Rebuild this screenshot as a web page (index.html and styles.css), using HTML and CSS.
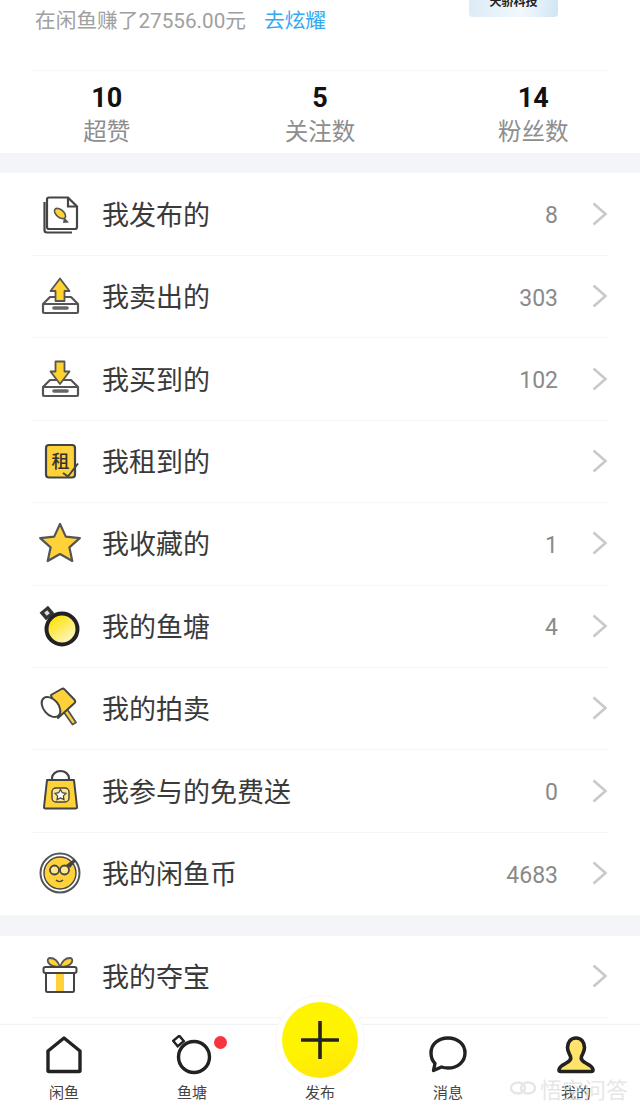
FILE: index.html
```html
<!DOCTYPE html>
<html lang="zh-CN">
<head>
  <meta charset="utf-8">
  <title>我的</title>
  <link rel="stylesheet" href="styles.css">
</head>
<body>
  <svg class="defs" width="0" height="0" aria-hidden="true">
    <defs>
      <linearGradient id="pondFill" x1="0.2" y1="0.1" x2="0.8" y2="0.9">
        <stop offset="0" stop-color="#ffe100"/>
        <stop offset="1" stop-color="#fdf6c8"/>
      </linearGradient>
      <symbol id="chevron" viewBox="0 0 16 24">
        <path d="M1.500 1.500l12 10.500-12 10.500" fill="none" stroke="#c9c9c9" stroke-width="2.600"/>
      </symbol>
    </defs>
  </svg>

  <div class="page">
    <main class="scroll">
      <!-- 顶部收入 -->
      <div class="earn">
        <p class="earn-text">在闲鱼赚了27556.00元<a class="earn-link" href="#">去炫耀</a></p>
        <div class="badge"><span>天骄科技</span></div>
      </div>

      <div class="stats">
        <div class="stat"><b>10</b><span>超赞</span></div>
        <div class="stat"><b>5</b><span>关注数</span></div>
        <div class="stat"><b>14</b><span>粉丝数</span></div>
      </div>

      <ul class="menu">
        <li class="row">
          <svg class="row-icon" viewBox="0 0 56 56">
            <path d="M12.500 16v28a2.500 2.500 0 0 0 2.500 2.500h25" fill="none" stroke="#444" stroke-width="2.200"/>
            <path d="M17 11.500h19l9 9V41a2 2 0 0 1-2 2H17a2 2 0 0 1-2-2V13.500a2 2 0 0 1 2-2z" fill="#fff" stroke="#444" stroke-width="2.200"/>
            <path d="M36 11.500v9h9" fill="none" stroke="#444" stroke-width="2.200"/>
            <path d="M32 31l5 5.500-6 .5z" fill="#555"/>
            <ellipse cx="28" cy="27.500" rx="6.500" ry="3.800" transform="rotate(40 28 27.500)" fill="#ffd43a" stroke="#555" stroke-width="1.600"/>
          </svg>
          <span class="row-title">我发布的</span><span class="row-num">8</span>
          <svg class="chevron"><use href="#chevron"/></svg>
        </li>
        <li class="row">
          <svg class="row-icon" viewBox="0 0 56 56">
            <path d="M18 29L11 36v8a1 1 0 0 0 1 1h33a1 1 0 0 0 1-1v-8l-7-7z" fill="#fff" stroke="#555" stroke-width="2.200" stroke-linejoin="round"/>
            <path d="M11 36h35" stroke="#555" stroke-width="2.200"/>
            <path d="M28 10.500l9.500 12.500H32.500v10h-9V23h-5z" fill="#ffd22e" stroke="#555" stroke-width="1.800" stroke-linejoin="round"/>
            <path d="M22 40h13" stroke="#666" stroke-width="3.600" stroke-linecap="round"/>
          </svg>
          <span class="row-title">我卖出的</span><span class="row-num">303</span>
          <svg class="chevron"><use href="#chevron"/></svg>
        </li>
        <li class="row">
          <svg class="row-icon" viewBox="0 0 56 56">
            <path d="M18 29L11 36v8a1 1 0 0 0 1 1h33a1 1 0 0 0 1-1v-8l-7-7z" fill="#fff" stroke="#555" stroke-width="2.200" stroke-linejoin="round"/>
            <path d="M11 36h35" stroke="#555" stroke-width="2.200"/>
            <path d="M23.500 10.500h9v10h5L28 33l-9.500-12.500h5z" fill="#ffd22e" stroke="#555" stroke-width="1.800" stroke-linejoin="round"/>
            <path d="M22 40h13" stroke="#666" stroke-width="3.600" stroke-linecap="round"/>
          </svg>
          <span class="row-title">我买到的</span><span class="row-num">102</span>
          <svg class="chevron"><use href="#chevron"/></svg>
        </li>
        <li class="row">
          <svg class="row-icon" viewBox="0 0 56 56">
            <rect x="14" y="12" width="29" height="32.500" rx="3" fill="#ffd23a" stroke="#444" stroke-width="2.200"/>
            <text class="rent-char" x="28.500" y="34.500" text-anchor="middle">租</text>
            <path d="M31 40l5 3.500L46 30.500" fill="none" stroke="#444" stroke-width="2"/>
          </svg>
          <span class="row-title">我租到的</span>
          <svg class="chevron"><use href="#chevron"/></svg>
        </li>
        <li class="row">
          <svg class="row-icon" viewBox="0 0 56 56">
            <path d="M28 9l5.800 12.600 14 1.500-10.400 9.300 2.900 13.600L28 39l-12.300 7 2.900-13.600L8.200 23.100l14-1.500z" fill="#ffd23a" stroke="#555" stroke-width="2.200" stroke-linejoin="round"/>
          </svg>
          <span class="row-title">我收藏的</span><span class="row-num">1</span>
          <svg class="chevron"><use href="#chevron"/></svg>
        </li>
        <li class="row">
          <svg class="row-icon" viewBox="0 0 56 56">
            <rect x="9.500" y="10" width="11" height="10" transform="rotate(-40 15 15)" fill="#333"/>
            <rect x="13" y="13" width="4" height="4" transform="rotate(-40 15 15)" fill="#ddd"/>
            <circle cx="30" cy="31" r="15.500" fill="url(#pondFill)" stroke="#222" stroke-width="4"/>
          </svg>
          <span class="row-title">我的鱼塘</span><span class="row-num">4</span>
          <svg class="chevron"><use href="#chevron"/></svg>
        </li>
        <li class="row">
          <svg class="row-icon" viewBox="0 0 56 56">
            <path d="M31 31l9.500 13.500 3.500-2L35 29z" fill="#ffd23a" stroke="#555" stroke-width="1.800" stroke-linejoin="round"/>
            <path d="M19 15L29.500 9a2.500 2.500 0 0 1 3 .4l10 10.400a2.500 2.500 0 0 1 .1 3.200L26 38z" fill="#ffd23a" stroke="#444" stroke-width="2" stroke-linejoin="round"/>
            <ellipse cx="19" cy="27" rx="7.500" ry="11.500" transform="rotate(-40 19 27)" fill="#fff" stroke="#444" stroke-width="2"/>
          </svg>
          <span class="row-title">我的拍卖</span>
          <svg class="chevron"><use href="#chevron"/></svg>
        </li>
        <li class="row">
          <svg class="row-icon" viewBox="0 0 56 56">
            <path d="M20 17v-2a8.500 7 0 0 1 17 0v2" fill="none" stroke="#444" stroke-width="2.200"/>
            <path d="M15 17h27l3 27a1.500 1.500 0 0 1-1.500 1.500h-30A1.500 1.500 0 0 1 12 44z" fill="#ffd23a" stroke="#444" stroke-width="2" stroke-linejoin="round"/>
            <rect x="20" y="25" width="17" height="14" rx="4" fill="#ffe88a" stroke="#444" stroke-width="1.400"/>
            <path d="M28.500 26.500l1.800 3.200 3.700.6-2.600 2.600.6 3.700-3.500-1.700-3.500 1.700.6-3.700-2.600-2.600 3.700-.6z" fill="#fff" stroke="#444" stroke-width="1.200"/>
          </svg>
          <span class="row-title">我参与的免费送</span><span class="row-num">0</span>
          <svg class="chevron"><use href="#chevron"/></svg>
        </li>
        <li class="row">
          <svg class="row-icon" viewBox="0 0 56 56">
            <circle cx="28" cy="28" r="19.500" fill="#fff" stroke="#555" stroke-width="2"/>
            <circle cx="28" cy="28" r="16" fill="#ffd23a" stroke="#444" stroke-width="1.400"/>
            <circle cx="22.500" cy="25" r="4.500" fill="#ffe88a" stroke="#444" stroke-width="1.800"/>
            <circle cx="32.500" cy="25" r="4.500" fill="#ffe88a" stroke="#444" stroke-width="1.800"/>
            <path d="M24 35c2 2 5 2 7 0" fill="none" stroke="#444" stroke-width="1.500"/>
            <path d="M34 20l8-6 2 2-6 7z" fill="#444"/>
          </svg>
          <span class="row-title">我的闲鱼币</span><span class="row-num">4683</span>
          <svg class="chevron"><use href="#chevron"/></svg>
        </li>
      </ul>

      <ul class="menu menu-second">
        <li class="row">
          <svg class="row-icon" viewBox="0 0 56 56">
            <path d="M28 19c-2-6-6-9-10-9s-4 9 10 9zm0 0c2-6 6-9 10-9s4 9-10 9z" fill="#ffd23a" stroke="#555" stroke-width="1.800"/>
            <rect x="14" y="24" width="28" height="20" fill="#fff"/>
            <rect x="24" y="24" width="8" height="20" fill="#ffd23a"/>
            <rect x="14" y="24" width="28" height="20" rx="1.500" fill="none" stroke="#444" stroke-width="2"/>
            <rect x="11.500" y="19" width="33" height="6" rx="2" fill="#fff" stroke="#444" stroke-width="2"/>
          </svg>
          <span class="row-title">我的夺宝</span>
          <svg class="chevron"><use href="#chevron"/></svg>
        </li>
      </ul>
    </main>

    <!-- 底部导航 -->
    <nav class="tabbar">
      <a class="tab" href="#">
        <svg class="tab-icon" viewBox="0 0 40 40">
          <path d="M20 3L36 16v19.500a1 1 0 0 1-1 1H5a1 1 0 0 1-1-1V16z" fill="none" stroke="#222" stroke-width="3.400" stroke-linejoin="round"/>
        </svg>
        <span>闲鱼</span>
      </a>
      <a class="tab tab-dot" href="#">
        <svg class="tab-icon" viewBox="0 0 40 40">
          <rect x="2.500" y="2.500" width="8" height="7" transform="rotate(-40 6.500 6)" fill="none" stroke="#222" stroke-width="2.400"/>
          <circle cx="22" cy="22" r="15.500" fill="#fff" stroke="#222" stroke-width="3.400"/>
        </svg>
        <span>鱼塘</span>
      </a>
      <a class="tab tab-publish" href="#">
        <span class="publish-btn">
          <svg width="38" height="38" viewBox="0 0 38 38">
            <path d="M1 19h36M19 1v36" stroke="#222" stroke-width="3.600" stroke-linecap="round"/>
          </svg>
        </span>
        <span>发布</span>
      </a>
      <a class="tab" href="#">
        <svg class="tab-icon" viewBox="0 0 40 40">
          <path d="M20 3c10 0 17 6.500 17 15S30 33 20 33c-3 0-5-.5-6.500-1l-8 3.500 1.500-7C4 25.500 3 22 3 18 3 9.500 10 3 20 3z" fill="none" stroke="#222" stroke-width="3.400" stroke-linejoin="round"/>
        </svg>
        <span>消息</span>
      </a>
      <a class="tab" href="#">
        <svg class="tab-icon" viewBox="0 0 40 40">
          <path d="M20 3c-5.500 0-8.500 4.500-8.500 9.500 0 4 2 6.500 3 9 1 3-1 5-5 7-3 1.500-6.500 3-6.500 6.500 0 1 1 1.500 2 1.500h30c1 0 2-.5 2-1.500 0-3.500-3.500-5-6.500-6.500-4-2-6-4-5-7 1-2.500 3-5 3-9C28.500 7.500 25.500 3 20 3z" fill="#ffe36a" stroke="#222" stroke-width="3.600" stroke-linejoin="round"/>
        </svg>
        <span>我的</span>
      </a>
    </nav>

    <!-- 水印 -->
    <div class="watermark">
      <svg width="26" height="18" viewBox="0 0 26 18">
        <ellipse cx="8" cy="9" rx="7" ry="5.500" fill="none" stroke="#e6e6e6" stroke-width="2.500"/>
        <ellipse cx="18" cy="9" rx="7" ry="5.500" fill="none" stroke="#e6e6e6" stroke-width="2.500"/>
      </svg>
      <span>悟空问答</span>
    </div>
  </div>
</body>
</html>
```

FILE: styles.css
```css
/* Base */
* {
  box-sizing: border-box;
}

body {
  margin: 0;
  background-color: #fff;
  font-family: "Noto Sans CJK SC", "Noto Sans", sans-serif;
  color: #333;
}

ul {
  list-style: none;
  margin: 0;
  padding: 0;
}

a {
  text-decoration: none;
  color: inherit;
}

.defs {
  position: absolute;
}

.page {
  position: relative;
  display: flex;
  flex-direction: column;
  height: 1111px;
  overflow: hidden;
}

.scroll {
  flex: 1;
  min-height: 0;
  overflow: hidden;
}

/* Earnings line */
.earn {
  display: flex;
  justify-content: space-between;
  align-items: flex-start;
  height: 71px;
  margin: 0 32px;
  padding: 0 50px 0 3px;
  border-bottom: 1px solid #f6f6f6;
}

.earn-text {
  margin: 6px 0 0;
  font-size: 20.7px;
  line-height: 30px;
  color: #a0a0a0;
  font-family: Roboto, "Noto Sans CJK SC", sans-serif;
}

.earn-link {
  margin-left: 18px;
  color: #35a9f0;
}

/* Card scrolled off the top, only its lower edge shows */
.badge {
  display: flex;
  justify-content: center;
  align-items: flex-end;
  width: 89px;
  height: 17px;
  overflow: hidden;
  border-radius: 0 0 4px 4px;
  background: linear-gradient(100deg, #dcebf6, #f2f8fc 60%, #cfe5f5);
}

.badge span {
  flex: none;
  margin-bottom: 10px;
  font-size: 12px;
  line-height: 12px;
  font-weight: 700;
  color: #222;
}

/* Stats */
.stats {
  display: grid;
  grid-template-columns: 1fr 1fr 1fr;
  height: 82px;
  padding: 11px 0 0;
}

.stat {
  display: flex;
  flex-direction: column;
  align-items: center;
}

.stat b {
  font-family: Roboto, sans-serif;
  font-size: 27px;
  line-height: 32px;
  font-weight: 700;
  color: #111;
}

.stat span {
  margin-top: -1px;
  font-size: 23.5px;
  line-height: 34px;
  color: #8e8e8e;
}

/* Menu rows */
.menu {
  padding: 0.6px 32px 0;
  border-top: 20px solid #f4f5f9;
}

.menu-second {
  margin-top: -0.6px;
  padding-top: 0;
  border-top-width: 21px;
}

.row {
  display: flex;
  align-items: center;
  height: 82.4px;
  padding-bottom: 1px;
  border-bottom: 1px solid #f6f6f6;
}

.menu > .row:nth-child(9) {
  border-bottom: 0;
}

.row-icon {
  flex: none;
  width: 56px;
  height: 56px;
  margin-right: 14px;
}

.rent-char {
  font-size: 18px;
  font-weight: 500;
  fill: #333;
}

.row-title {
  flex: 1;
  font-size: 27px;
  line-height: 36px;
  color: #3a3a3a;
}

.row-num {
  margin-top: 4px;
  font-family: Roboto, sans-serif;
  font-size: 23px;
  color: #8a8a8a;
}

.chevron {
  flex: none;
  width: 16px;
  height: 24px;
  margin-left: 34px;
}

/* Tab bar */
.tabbar {
  flex: none;
  display: grid;
  grid-template-columns: repeat(5, 1fr);
  height: 87px;
  background-color: #fff;
  border-top: 1px solid #f2f2f2;
  box-shadow: 0 -1px 2px rgba(0, 0, 0, 0.02);
}

.tab {
  position: relative;
  display: flex;
  flex-direction: column;
  align-items: center;
  padding-top: 10px;
  font-size: 15px;
  line-height: 20px;
  color: #444;
}

.tab-icon {
  width: 40px;
  height: 40px;
  margin-bottom: 7px;
}

.tab-publish span:last-child {
  margin-top: 47px;
}

.tab-dot::after {
  content: "";
  position: absolute;
  top: 11px;
  left: 86px;
  width: 13px;
  height: 13px;
  border-radius: 50%;
  background-color: #f8343f;
}

.publish-btn {
  position: absolute;
  top: -23px;
  left: 26px;
  display: flex;
  justify-content: center;
  align-items: center;
  width: 76px;
  height: 76px;
  border-radius: 50%;
  background: linear-gradient(160deg, #fff400 55%, #ffe20c);
  box-shadow: 0 0 0 6px #fff, 0 0 0 7px #f8f8f8;
}

/* Watermark over the tab bar */
.watermark {
  position: absolute;
  right: 12px;
  bottom: 10px;
  display: flex;
  align-items: center;
  gap: 4px;
  font-size: 22px;
  line-height: 26px;
  color: rgba(226, 226, 226, 0.85);
}
```
